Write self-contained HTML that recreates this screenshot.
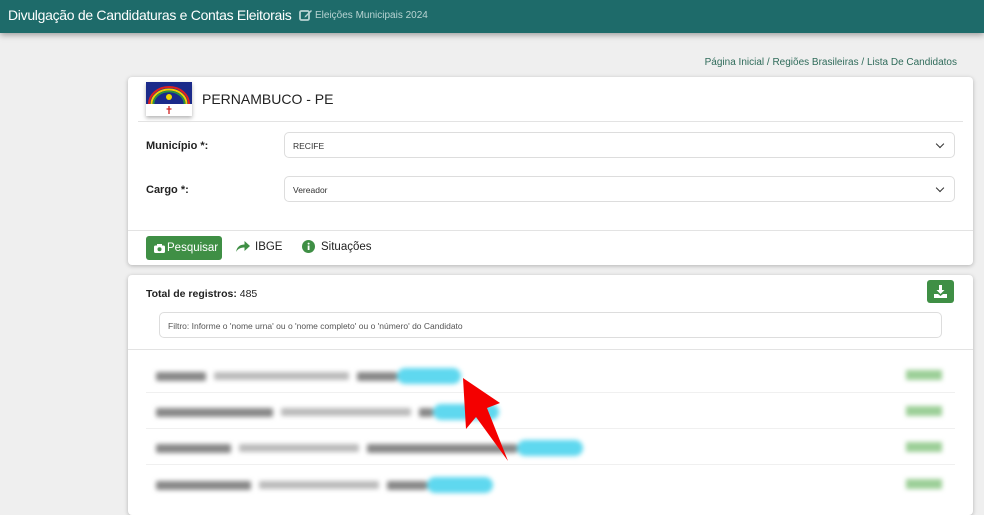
<!DOCTYPE html>
<html><head><meta charset="utf-8"><style>
*{box-sizing:border-box;margin:0;padding:0}
body{width:984px;height:499px;overflow:hidden;background:#efefef;font-family:"Liberation Sans",Arial,sans-serif;position:relative}
.hdr{position:absolute;left:0;top:0;width:984px;height:33px;background:#1e6b6a;box-shadow:0 2px 6px rgba(0,0,0,.35)}
.hdr .t{position:absolute;left:8px;top:7px;color:#fff;font-size:14px;letter-spacing:-0.3px;white-space:nowrap}
.hdr .s{position:absolute;top:10px;color:#b9d4d3;font-size:10px;white-space:nowrap}
.bc{position:absolute;right:27px;top:57px;font-size:10px;color:#2f6b5a}
.card{position:absolute;left:128px;width:845px;background:#fff;border-radius:4px;box-shadow:0 1px 4px rgba(0,0,0,.25)}
.lbl{position:absolute;left:18px;font-size:11px;font-weight:bold;color:#222}
.sel{position:absolute;left:156px;width:671px;height:26px;border:1px solid #ddd;border-radius:5px;font-size:8.5px;padding:8px 8px;color:#333}
.sel:after{content:"";position:absolute;right:11px;top:8px;width:5px;height:5px;border-right:1.5px solid #333;border-bottom:1.5px solid #333;transform:rotate(45deg)}
.hr{position:absolute;left:0;right:0;height:1px;background:#e3e3e3}
.row{position:absolute;left:28px;filter:blur(2.5px);display:flex;align-items:center;gap:8px}
.g{height:9px;background:#888;border-radius:2px}
.lg{height:8px;background:#bbb;border-radius:2px}
.b{height:16px;background:#5fd8ef;border-radius:8px}
.n{position:absolute;left:778px;width:36px;height:10px;background:#9ccf97;filter:blur(2.5px)}
</style></head><body>
<div class="hdr"><div class="t">Divulgação de Candidaturas e Contas Eleitorais</div>
<svg style="position:absolute;left:299px;top:8px" width="14" height="14" viewBox="0 0 14 14"><rect x="1" y="3" width="9" height="9" rx="1.5" fill="none" stroke="#b9d4d3" stroke-width="1.8"/><path d="M6 8 L12 2 L13 3 L7 9 L5.5 9.5Z" fill="#b9d4d3"/></svg>
<div class="s" style="left:315px">Eleições Municipais 2024</div></div>
<div class="bc">Página Inicial / Regiões Brasileiras / Lista De Candidatos</div>
<div class="card" style="top:77px;height:188px">
<svg style="position:absolute;left:18px;top:5px;box-shadow:0 2px 4px rgba(0,0,0,.3)" width="46" height="34" viewBox="0 0 46 34"><rect width="46" height="22" fill="#1b2a8a"/><rect y="22" width="46" height="12" fill="#fff"/><path d="M3 22 A20 17 0 0 1 43 22" fill="none" stroke="#e02020" stroke-width="2"/><path d="M5.5 22 A17.5 14.5 0 0 1 40.5 22" fill="none" stroke="#f2d000" stroke-width="2"/><path d="M7.5 22 A15.5 12.5 0 0 1 38.5 22" fill="none" stroke="#2a9a3a" stroke-width="1.6"/><circle cx="23" cy="15" r="3" fill="#f5d800"/><path d="M23 24v8M20.5 27h5" stroke="#d02020" stroke-width="1.3"/></svg>
<div style="position:absolute;left:74px;top:14px;font-size:14px;color:#222">PERNAMBUCO - PE</div>
<div class="hr" style="top:44px;left:10px;right:10px"></div>
<div class="lbl" style="top:63px">Município *:</div><div class="sel" style="top:55px">RECIFE</div>
<div class="lbl" style="top:107px">Cargo *:</div><div class="sel" style="top:99px">Vereador</div>
<div class="hr" style="top:153px"></div>
<div style="position:absolute;left:18px;top:159px;width:76px;height:24px;background:#3f8f45;border-radius:3px;color:#fff;font-size:11.5px;padding:6px 0 0 21px">Pesquisar
<svg style="position:absolute;left:8px;top:8px" width="11" height="9" viewBox="0 0 11 9"><rect y="1.5" width="11" height="7.5" rx="1.5" fill="#fff"/><rect x="3" y="0" width="5" height="3" fill="#fff"/><circle cx="5.5" cy="5.2" r="2" fill="#3f8f45"/></svg></div>
<svg style="position:absolute;left:108px;top:163px" width="14" height="12" viewBox="0 0 14 12"><path d="M0 12 C1 6 5 4.5 8.5 4.5 V1 L14 6 L8.5 11 V7.5 C5 7.5 2 8.5 0 12Z" fill="#3f8f45"/></svg>
<div style="position:absolute;left:127px;top:164px;font-size:11.5px;color:#222">IBGE</div>
<svg style="position:absolute;left:174px;top:163px" width="13" height="13" viewBox="0 0 13 13"><circle cx="6.5" cy="6.5" r="6.5" fill="#3f8f45"/><rect x="5.7" y="5.5" width="1.8" height="4.5" fill="#fff"/><circle cx="6.6" cy="3.6" r="1" fill="#fff"/></svg>
<div style="position:absolute;left:193px;top:164px;font-size:11.5px;color:#222">Situações</div>
</div>
<div class="card" style="top:275px;height:240px">
<div style="position:absolute;left:18px;top:13px;font-size:10.5px;color:#222"><b>Total de registros:</b> 485</div>
<div style="position:absolute;left:799px;top:5px;width:27px;height:23px;background:#3f8f45;border-radius:3px">
<svg style="position:absolute;left:7px;top:5px" width="13" height="13" viewBox="0 0 13 13"><path d="M5 0h3v5h2.5L6.5 9 2.5 5H5Z M0 9h4l2.5 2 2.5-2h4v4H0Z" fill="#fff"/></svg></div>
<div style="position:absolute;left:31px;top:37px;width:783px;height:26px;border:1px solid #ddd;border-radius:5px;font-size:8.5px;color:#555;padding:8px 8px">Filtro: Informe o 'nome urna' ou o 'nome completo' ou o 'número' do Candidato</div>
<div class="hr" style="top:74px"></div>
<div class="row" style="top:93px"><div class="g" style="width:50px"></div><div class="lg" style="width:135px"></div><div class="g" style="width:40px"></div><div class="b" style="width:64px;margin-left:-8px"></div></div>
<div class="n" style="top:95px"></div>
<div class="hr" style="top:117px;left:18px;right:18px;background:#f0f0f0"></div>
<div class="row" style="top:129px"><div class="g" style="width:117px"></div><div class="lg" style="width:130px"></div><div class="g" style="width:14px"></div><div class="b" style="width:66px;margin-left:-8px"></div></div>
<div class="n" style="top:131px"></div>
<div class="hr" style="top:153px;left:18px;right:18px;background:#f0f0f0"></div>
<div class="row" style="top:165px"><div class="g" style="width:75px"></div><div class="lg" style="width:120px"></div><div class="g" style="width:150px"></div><div class="b" style="width:66px;margin-left:-8px"></div></div>
<div class="n" style="top:167px"></div>
<div class="hr" style="top:189px;left:18px;right:18px;background:#f0f0f0"></div>
<div class="row" style="top:202px"><div class="g" style="width:95px"></div><div class="lg" style="width:120px"></div><div class="g" style="width:40px"></div><div class="b" style="width:66px;margin-left:-8px"></div></div>
<div class="n" style="top:204px"></div>
</div>
<svg style="position:absolute;left:0;top:0" width="984" height="499"><polygon points="463,378 500,403 487,408 508,461 476,417 466,429" fill="#f40000"/></svg>
</body></html>
